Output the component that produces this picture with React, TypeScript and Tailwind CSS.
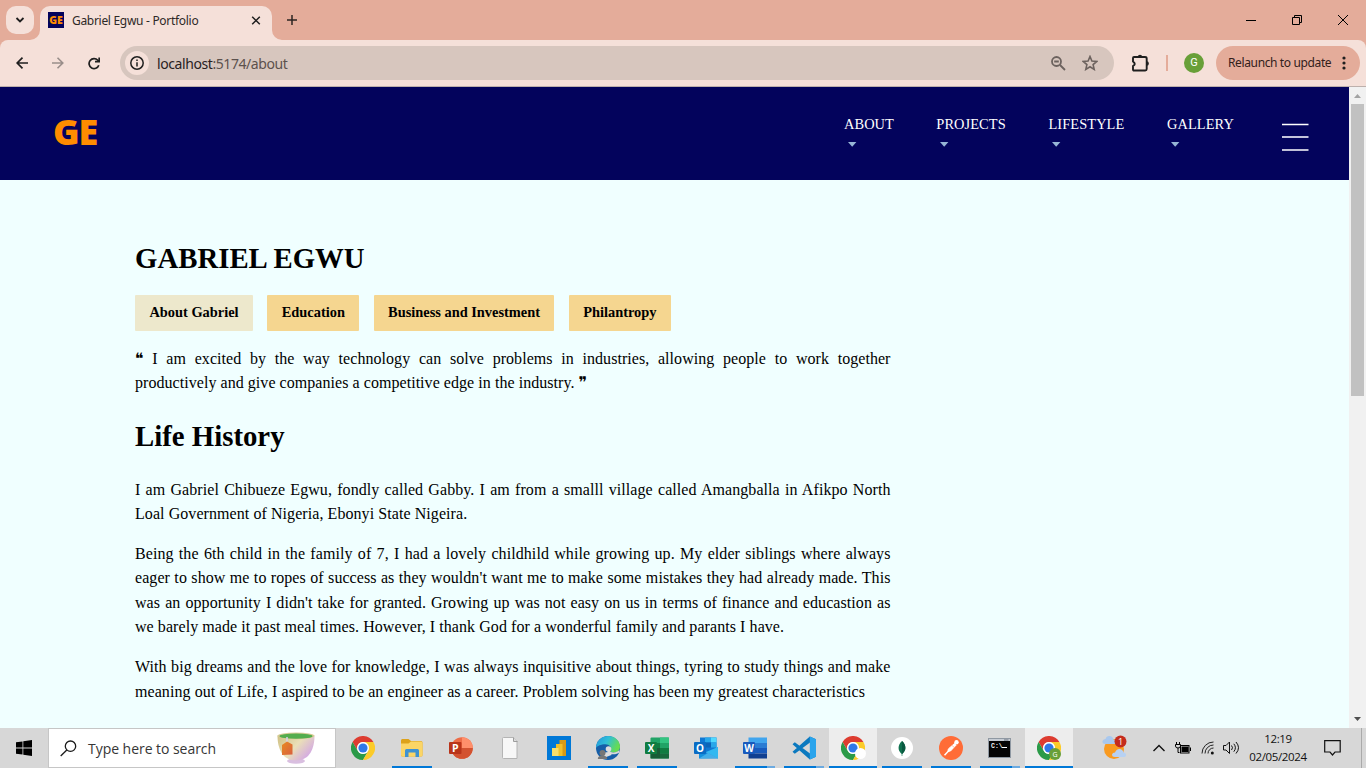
import React from "react";

const serif = "font-['Liberation_Serif',serif]";

function Chrome() {
  return (
    <svg width="24" height="24" viewBox="0 0 24 24">
      <path d="M1.6 6A12 12 0 0 1 22.4 6H12A6 6 0 0 0 6.8 15Z" fill="#dd3c30" />
      <path d="M1.6 6L6.8 15A6 6 0 0 0 17.2 15L12 24A12 12 0 0 1 1.6 6Z" fill="#2b9a48" />
      <path d="M22.4 6H12A6 6 0 0 1 17.2 15L12 24A12 12 0 0 0 22.4 6Z" fill="#fccb29" />
      <circle cx="12" cy="12" r="5.9" fill="#fff" />
      <circle cx="12" cy="12" r="4.6" fill="#2f78e8" />
    </svg>
  );
}

function Explorer() {
  return (
    <svg width="24" height="24" viewBox="0 0 24 24">
      <path d="M1 4.5Q1 3 2.200 3H8.500L11 5H21Q22.500 5 22.500 6.500V19Q22.500 20.500 21 20.500H2.500Q1 20.500 1 19Z" fill="#dda21a" />
      <path d="M1 7.500H8.500L11 5.500H21Q22.500 5.500 22.500 7V19Q22.500 20.500 21 20.500H2.500Q1 20.500 1 19Z" fill="#fbd566" />
      <path d="M5 21V14.500Q5 13 6.500 13H17.500Q19 13 19 14.500V21H15.500V16.500H8.500V21Z" fill="#3f92d2" />
    </svg>
  );
}

function PowerPoint() {
  return (
    <svg width="26" height="24" viewBox="0 0 26 24">
      <circle cx="14" cy="12" r="10.800" fill="#ed6c47" />
      <path d="M14 1.200A10.800 10.800 0 0 1 24.800 12H14Z" fill="#ff8f6b" />
      <path d="M3.200 12H24.800A10.800 10.800 0 0 1 3.200 12Z" fill="#d35230" />
      <rect x="1" y="6" width="12.500" height="12" rx="1" fill="#b9341a" />
      <text x="7.200" y="15.800" textAnchor="middle" fontSize="10.500" fontWeight="700" fill="#fff" fontFamily="Open Sans">P</text>
    </svg>
  );
}

function FilePage() {
  return (
    <svg width="24" height="24" viewBox="0 0 24 24">
      <path d="M5.500 1.500H15.500L19 5V22.500H5.500Q4.500 22.500 4.500 21.500V2.500Q4.500 1.500 5.500 1.500Z" fill="#f7f7f7" stroke="#b4b4b4" />
      <path d="M15.500 1.500V5.500H19.500" fill="#ddd" stroke="#9c9c9c" />
    </svg>
  );
}

function PowerBi() {
  return (
    <svg width="24" height="24" viewBox="0 0 24 24">
      <rect width="24" height="24" fill="#0078d7" />
      <rect x="12.500" y="4" width="6.500" height="16" fill="#d69a16" />
      <rect x="9" y="8" width="6.500" height="12" fill="#f0c029" />
      <rect x="5" y="12" width="6.500" height="8" fill="#f9df6a" />
    </svg>
  );
}

function Edge() {
  return (
    <svg width="24" height="24" viewBox="0 0 24 24">
      <defs>
        <linearGradient id="edgeTop" x1="0" y1="0" x2="1" y2=".4">
          <stop offset="0" stopColor="#2294dc" />
          <stop offset=".5" stopColor="#2fbfd8" />
          <stop offset="1" stopColor="#66dc52" />
        </linearGradient>
      </defs>
      <circle cx="12" cy="12" r="12" fill="#155ea8" />
      <path d="M0 12C0 5 5.500 0 12 0C19 0 24 5 24 10.500C24 14.500 21 16.500 17.500 16.500C14.500 16.500 13.500 15.300 14.200 14.300C16 11.500 13.500 8.300 9.500 8.300C5 8.300 1 10 0 12Z" fill="url(#edgeTop)" />
      <path d="M14.200 14.300C13.500 15.500 14.700 16.500 17.500 16.500C20 16.500 22 15.500 23.300 14V16.500C21.500 18 19 18.500 16 18.200C12 17.800 10 14 11.800 11.200Q14.300 12.200 14.200 14.300Z" fill="#d8d8d8" />
      <circle cx="12.500" cy="13" r="2.800" fill="#dcdcdc" />
      <path d="M7.500 22V18Q8 16 12.500 16Q15.500 16.500 15.500 19Z" fill="#dcdcdc" />
      <circle cx="6.500" cy="17" r="3" fill="#777" />
      <path d="M1.800 23Q1.800 19.500 6.500 19.500T11.200 23Z" fill="#777" />
    </svg>
  );
}

function Excel() {
  return (
    <svg width="26" height="24" viewBox="0 0 26 24">
      <rect x="6.500" y="1.500" width="18.500" height="21" rx="1" fill="#21a366" />
      <rect x="16" y="1.500" width="9" height="5.500" fill="#33c481" />
      <rect x="6.500" y="7" width="9.500" height="5" fill="#107c41" />
      <rect x="6.500" y="12" width="9.500" height="10.500" fill="#185c37" />
      <rect x="16" y="12" width="9" height="5.500" fill="#107c41" />
      <rect x="16" y="17.500" width="9" height="5" fill="#18693d" />
      <rect x="1" y="6" width="12" height="12" rx="1" fill="#107c41" />
      <text x="7" y="15.700" textAnchor="middle" fontSize="10" fontWeight="700" fill="#fff" fontFamily="Open Sans">X</text>
    </svg>
  );
}

function Outlook() {
  return (
    <svg width="26" height="24" viewBox="0 0 26 24">
      <rect x="7" y="1.500" width="16.500" height="15" fill="#0f78d4" />
      <rect x="12" y="1.500" width="6" height="5" fill="#28a8ea" />
      <rect x="18" y="1.500" width="5.500" height="5" fill="#50d9ff" />
      <rect x="12" y="6.500" width="6" height="5" fill="#0c64b8" />
      <rect x="18" y="6.500" width="5.500" height="5" fill="#28a8ea" />
      <path d="M6 12L15.500 17.500L25 11V22.500H6Z" fill="#1490df" />
      <path d="M25 11V22.500L13 16Z" fill="#32b8f0" />
      <path d="M6 22.500L25 22L15 17Z" fill="#45aee8" />
      <rect x="1" y="6" width="12" height="12" rx="1" fill="#0a6cc4" />
      <text x="7" y="15.700" textAnchor="middle" fontSize="10" fontWeight="700" fill="#fff" fontFamily="Open Sans">O</text>
    </svg>
  );
}

function Word() {
  return (
    <svg width="26" height="24" viewBox="0 0 26 24">
      <rect x="6.500" y="1.500" width="18.500" height="5.500" fill="#41a5ee" />
      <rect x="6.500" y="7" width="18.500" height="5" fill="#2b7cd3" />
      <rect x="6.500" y="12" width="18.500" height="5.500" fill="#185abd" />
      <rect x="6.500" y="17.500" width="18.500" height="5" fill="#103f91" />
      <rect x="1" y="6" width="12" height="12" rx="1" fill="#185abd" />
      <text x="7" y="15.700" textAnchor="middle" fontSize="10" fontWeight="700" fill="#fff" fontFamily="Open Sans">W</text>
    </svg>
  );
}

function VsCode() {
  return (
    <svg width="24" height="24" viewBox="0 0 24 24">
      <path d="M17.800 .500L24 3.200V20.800L17.800 23.500L.500 8.300L2.800 6.200L18 17.500V6.500L2.800 17.800L.500 15.700Z" fill="#0b79bf" />
      <path d="M17.800 .500L24 3.200V20.800L17.800 23.500Z" fill="#2aa4ec" />
    </svg>
  );
}

function Mongo() {
  return (
    <svg width="22" height="22" viewBox="0 0 22 22">
      <circle cx="11" cy="11" r="11" fill="#fff" />
      <path d="M11 4C15.500 8 15.500 13.500 11.300 17V19H10.700V17C6.500 13.500 6.500 8 11 4Z" fill="#10714f" />
      <path d="M11 4C15.500 8 15.500 13.500 11 17Z" fill="#0a5940" />
    </svg>
  );
}

function Postman() {
  return (
    <svg width="24" height="24" viewBox="0 0 24 24">
      <circle cx="12" cy="12" r="12" fill="#ff6c37" />
      <circle cx="17.500" cy="6.300" r="2.200" fill="#fff" />
      <path d="M15.500 7.500L17 9.200L11.500 15L9 15.300L9.300 13Z" fill="#fff" stroke="#fff" strokeWidth="1" />
      <path d="M10 14.500L5.500 19.200" stroke="#fff" strokeWidth="1.500" />
      <path d="M13 9.500L16 12" stroke="#ff9a75" strokeWidth=".6" />
    </svg>
  );
}

function Terminal() {
  return (
    <svg width="24" height="20" viewBox="0 0 24 20">
      <rect x=".500" y=".500" width="22" height="19" fill="#050505" stroke="#8f98a2" />
      <rect x="1" y="1" width="21" height="2" fill="#c6ccd4" />
      <path d="M16 2H20.500" stroke="#68717c" />
      <text x="3" y="10" fontSize="6.500" fontWeight="700" fill="#f4f4f4" fontFamily="Liberation Mono">C:\</text>
      <path d="M14 9.500H19" stroke="#fff" />
    </svg>
  );
}

function TeaCup() {
  return (
    <svg width="38" height="32" viewBox="0 0 38 32">
      <defs>
        <linearGradient id="cup" x1="0" y1="0" x2="1" y2=".6">
          <stop offset="0" stopColor="#cfc083" />
          <stop offset=".55" stopColor="#eadfb8" />
          <stop offset="1" stopColor="#d3a8e4" />
        </linearGradient>
        <linearGradient id="tag" x1="0" y1="0" x2="1" y2="1">
          <stop offset="0" stopColor="#e88a20" />
          <stop offset="1" stopColor="#d9603f" />
        </linearGradient>
      </defs>
      <ellipse cx="19" cy="29" rx="9" ry="2.800" fill="#d9bfe0" />
      <path d="M.500 3.500H37.500C37.500 16 33 28.500 19 28.500S.500 16 .500 3.500Z" fill="url(#cup)" />
      <ellipse cx="19" cy="3.800" rx="18.500" ry="3.400" fill="#d8cb95" />
      <ellipse cx="19" cy="4.200" rx="16.500" ry="2.600" fill="#53ad4e" />
      <path d="M10 5V11" stroke="#d7d2ea" strokeWidth="1.500" />
      <path d="M5 13L10 9.500L15.500 12.500V22.500L5 23Z" fill="url(#tag)" />
    </svg>
  );
}

function Weather() {
  return (
    <svg width="26" height="26" viewBox="0 0 26 26">
      <circle cx="12" cy="14" r="10" fill="#f99a20" />
      <path d="M3.500 9Q0 9 .500 6Q1.500 4 3.500 4Q4.500 .5 8 1Q11 1.500 11.500 4.500Q14 5 13.500 9Z" fill="#a9c8ee" />
      <path d="M13 22Q10 22 10 19.500Q10.500 17.500 13 17.500Q14.500 13.500 18 14Q21 14.500 21.500 17.500Q24.500 18 24 20.500Q23.500 22 22 22Z" fill="#b7d1f3" />
      <circle cx="18.500" cy="6.500" r="6" fill="#c42b1c" />
      <text x="18.500" y="10" textAnchor="middle" fontSize="9" fill="#fff" fontFamily="Open Sans">1</text>
    </svg>
  );
}

type Slot = { icon: React.ReactNode; bar?: "open" | "stack"; active?: boolean; badge?: React.ReactNode };

const slots: Slot[] = [
  { icon: <Chrome /> },
  { icon: <Explorer />, bar: "open" },
  { icon: <PowerPoint /> },
  { icon: <FilePage /> },
  { icon: <PowerBi /> },
  { icon: <Edge />, bar: "open" },
  { icon: <Excel />, bar: "open" },
  { icon: <Outlook /> },
  { icon: <Word />, bar: "stack" },
  { icon: <VsCode />, bar: "stack" },
  { icon: <Chrome />, active: true, badge: <span className="absolute left-[26px] top-[20px] size-[11px] rounded-full bg-white" /> },
  { icon: <Mongo />, bar: "open" },
  { icon: <Postman />, bar: "open" },
  { icon: <Terminal />, bar: "stack" },
  {
    icon: <Chrome />,
    active: true,
    badge: (
      <span className="absolute left-[24px] top-[20px] flex size-3 items-center justify-center rounded-full bg-[#689f38] text-[7px] leading-none text-white">G</span>
    ),
  },
];

function TitleBar() {
  return (
    <div className="flex h-10 bg-[#e4ac9a]">
      <button className="ml-1.5 mt-1.5 flex size-7 items-center justify-center rounded-[10px] bg-[#f5e0d9]">
        <svg width="10" height="8" viewBox="0 0 10 8" fill="none" stroke="#1f1f1f" strokeWidth="1.800"><path d="M1.500 2L5 5.500L8.500 2" /></svg>
      </button>
      <div className="relative ml-1.5 mt-1.5 flex h-[34px] w-[232px] items-start rounded-t-[10px] bg-[#f5e0d9] pl-2 pt-1.5">
        <svg className="absolute -left-2.5 bottom-0" width="10" height="10"><path d="M10 0V10H0A10 10 0 0 0 10 0Z" fill="#f5e0d9" /></svg>
        <svg className="absolute -right-2.5 bottom-0" width="10" height="10"><path d="M0 0V10H10A10 10 0 0 1 0 0Z" fill="#f5e0d9" /></svg>
        <span className="flex size-4 items-center justify-center bg-[#03035c] font-['Open_Sans',sans-serif] text-[10.5px] font-extrabold leading-none text-[#ff8c00]">GE</span>
        <span className="ml-2 w-[179px] text-[12px] leading-[17px] tracking-[-0.3px] text-[#2e2927]">Gabriel Egwu - Portfolio</span>
        <svg className="mt-1" width="10" height="9" viewBox="0 0 10 9" stroke="#1f1f1f" strokeWidth="1.500"><path d="M1.200 .700L8.800 8.300M8.800 .700L1.200 8.300" /></svg>
      </div>
      <svg className="ml-[15px] mt-[15px]" width="10" height="10" stroke="#2c2422" strokeWidth="1.500"><path d="M5 0V10M0 5H10" /></svg>
      <div className="ml-auto flex pt-[15px]">
        <svg className="mr-9" width="10" height="10" stroke="#000"><path d="M0 5.500H10" /></svg>
        <svg className="mr-9" width="10" height="10" fill="none" stroke="#000"><path d="M.500 2.500H7.500V9.500H.500ZM2.500 2V.500H9.500V7.500H8" /></svg>
        <svg className="mr-[18px]" width="10" height="10" stroke="#000"><path d="M0 0L10 10M10 0L0 10" /></svg>
      </div>
    </div>
  );
}

function Toolbar() {
  return (
    <div className="bg-[#e4ac9a]">
      <div className="flex h-[47px] items-center rounded-t-[8px] border-b border-[#bdb0ac] bg-[#f5e0d9]">
        <svg className="ml-4" width="12" height="12" fill="none" stroke="#1f1f1f" strokeWidth="1.700"><path d="M12 6H1.500M6.500 .700L1.200 6L6.500 11.300" /></svg>
        <svg className="ml-6" width="12" height="12" fill="none" stroke="#998e8a" strokeWidth="1.600"><path d="M0 6H10.500M5.500 .700L10.800 6L5.500 11.300" /></svg>
        <svg className="ml-6" width="12" height="13" viewBox="0 0 12 13" fill="none" stroke="#1f1f1f" strokeWidth="1.700"><path d="M10.800 8.200A5 5 0 1 1 9.800 3.200L11 4.400" /><path d="M11.200 .500V4.700H7" /></svg>
        <div className="ml-5 flex h-[34px] w-[994px] items-center rounded-full bg-[#d7c6be] pl-[5px]">
          <span className="flex size-6 items-center justify-center rounded-full bg-[#f5e0d9]">
            <svg width="14" height="14" viewBox="0 0 14 14" fill="none" stroke="#1f1f1f" strokeWidth="1.500"><circle cx="7" cy="7" r="6.200" /><path d="M7 6.200V10.500M7 3.500V5" /></svg>
          </span>
          <span className="ml-2 text-[14px] tracking-[-0.42px] text-[#5c514d]"><span className="text-[#29211f]">localhost</span>:5174/about</span>
          <svg className="ml-auto" width="15" height="15" viewBox="0 0 15 15" fill="none" stroke="#6c625e" strokeWidth="1.800"><circle cx="5.500" cy="5.500" r="4.500" /><path d="M9 9L14 14M3.200 5.500H7.800" /></svg>
          <svg className="ml-4 mr-4" width="16" height="16" viewBox="0 0 16 16" fill="none" stroke="#6c625e" strokeWidth="1.600"><path d="M8 1.500L9.900 6L14.800 6.400L11.100 9.600L12.200 14.400L8 11.800L3.800 14.400L4.900 9.600L1.200 6.400L6.100 6Z" /></svg>
        </div>
        <svg className="ml-[18px]" width="18" height="18" viewBox="0 0 18 18"><path d="M2 3H13Q14.700 3 14.700 4.500V15Q14.700 16.500 13.200 16.500H2Q1 16.500 1 15.500V12Q4.500 10 1 7.500V4Q1 3 2 3Z" fill="none" stroke="#1f1f1f" strokeWidth="1.900" /><path d="M5.800 3A2.200 2.200 0 0 1 10.200 3ZM14.700 7.300A2.200 2.200 0 0 1 14.700 11.700Z" fill="#1f1f1f" /></svg>
        <span className="ml-4 h-4 w-0.5 bg-[#e4ac9a]" />
        <span className="ml-4 flex size-5 items-center justify-center rounded-full bg-[#689f38] font-['Roboto',sans-serif] text-[11px] text-white">G</span>
        <div className="ml-3 flex h-[34px] w-36 items-center rounded-full bg-[#e4ac9a] pl-3">
          <span className="whitespace-nowrap text-[12px] tracking-[-0.37px] text-[#33201a]">Relaunch to update</span>
          <svg className="ml-auto mr-3.5" width="4" height="14" fill="#1f1f1f"><circle cx="2" cy="2" r="1.600" /><circle cx="2" cy="7" r="1.600" /><circle cx="2" cy="12" r="1.600" /></svg>
        </div>
      </div>
    </div>
  );
}

function NavItem({ label, className }: { label: string; className: string }) {
  return (
    <div className={`flex flex-col ${className}`}>
      <span className="text-[14.4px] leading-[18px] tracking-[0.08px]">{label}</span>
      <svg className="ml-[4px] mt-[9px]" width="9" height="5"><path d="M0 0H8.400L4.200 4.800Z" fill="#97b6d6" /></svg>
    </div>
  );
}

function SiteHeader() {
  return (
    <header className={`flex h-[93px] shrink-0 items-start bg-[#03035c] text-white ${serif}`}>
      <div className="ml-[53px] mt-[26px] w-[791px] font-['Open_Sans',sans-serif] text-[36px] font-extrabold leading-[37px] tracking-[-1.2px] text-[#ff8c00]">GE</div>
      <nav className="flex pt-[28px]">
        <NavItem label="ABOUT" className="w-[92.300px]" />
        <NavItem label="PROJECTS" className="w-[112.200px]" />
        <NavItem label="LIFESTYLE" className="w-[118.500px]" />
        <NavItem label="GALLERY" className="w-[115px]" />
      </nav>
      <svg className="mt-[36px]" width="27" height="30"><path d="M0 1.500H26.500M0 27H26.500" stroke="#fff" strokeWidth="1.600" /><path d="M0 14H26.500" stroke="#c4c4dc" strokeWidth="2" /></svg>
    </header>
  );
}

function TabButton({ label, active }: { label: string; active?: boolean }) {
  return (
    <button className={`h-9 whitespace-nowrap rounded-[1px] px-[14.4px] text-[14.4px] font-bold leading-[34px] pb-0.5 text-black ${active ? "bg-[#ede8cc]" : "bg-[#f5d690]"}`}>{label}</button>
  );
}

function Article() {
  return (
    <main className={`w-[890.5px] pl-[135px] pt-[60px] text-[16px] leading-[24.48px] text-black ${serif}`}>
      <h1 className="text-[28.8px] font-bold leading-9">GABRIEL EGWU</h1>
      <div className="mt-[19px] flex gap-[14.4px]">
        <TabButton label="About Gabriel" active />
        <TabButton label="Education" />
        <TabButton label="Business and Investment" />
        <TabButton label="Philantropy" />
      </div>
      <p className="mt-4 text-justify tracking-[0.05px]">
        <span className="font-['DejaVu_Sans',sans-serif] text-[16px] leading-none tracking-normal">❝</span> I am excited by the way technology can solve problems in industries, allowing people to work together productively and give companies a competitive edge in the industry. <span className="font-['DejaVu_Sans',sans-serif] text-[16px] leading-none tracking-normal">❞</span>
      </p>
      <h2 className="mt-[22px] text-[28.8px] font-bold leading-9">Life History</h2>
      <div className="mt-[23.7px] flex flex-col gap-[15.3px] text-justify tracking-[0.07px]">
        <p>I am Gabriel Chibueze Egwu, fondly called Gabby. I am from a smalll village called Amangballa in Afikpo North Loal Government of Nigeria, Ebonyi State Nigeira.</p>
        <p>Being the 6th child in the family of 7, I had a lovely childhild while growing up. My elder siblings where always eager to show me to ropes of success as they wouldn't want me to make some mistakes they had already made. This was an opportunity I didn't take for granted. Growing up was not easy on us in terms of finance and educastion as we barely made it past meal times. However, I thank God for a wonderful family and parants I have.</p>
        <p>With big dreams and the love for knowledge, I was always inquisitive about things, tyring to study things and make meaning out of Life, I aspired to be an engineer as a career. Problem solving has been my greatest characteristics</p>
      </div>
    </main>
  );
}

function Scrollbar() {
  return (
    <div className="flex w-[17px] shrink-0 flex-col items-center bg-[#f1f1f1]">
      <svg className="mt-[7px]" width="7" height="4"><path d="M0 4L3.500 0L7 4Z" fill="#a3a3a3" /></svg>
      <div className="mt-1.5 h-[292px] w-[13px] bg-[#c1c1c1]" />
      <svg className="mb-[7px] mt-auto" width="7" height="4"><path d="M0 0L3.500 4L7 0Z" fill="#505050" /></svg>
    </div>
  );
}

function Taskbar() {
  return (
    <footer className="flex h-10 shrink-0 bg-[#d7d7d7] font-['Open_Sans',sans-serif]">
      <div className="flex w-12 items-center justify-center">
        <svg width="16" height="16" viewBox="0 0 16 16"><path d="M0 2.300L6.500 1.400V7.600H0ZM7.300 1.300L16 0V7.600H7.300ZM0 8.400H6.500V14.600L0 13.700ZM7.300 8.400H16V16L7.300 14.700Z" fill="#000" /></svg>
      </div>
      <div className="flex w-72 items-center border border-[#c6c6c6] bg-white pl-[11px]">
        <svg width="17" height="17" viewBox="0 0 17 17" fill="none" stroke="#1a1a1a" strokeWidth="1.300"><circle cx="10.500" cy="6.200" r="5.200" /><path d="M6.800 10L.700 16" /></svg>
        <span className="ml-[11px] text-[14px] tracking-[-0.04px] text-[#363636]">Type here to search</span>
        <span className="ml-auto mr-5"><TeaCup /></span>
      </div>
      <div className="ml-[3px] flex gap-px">
        {slots.map((s, i) => (
          <div key={i} className={`relative flex w-12 flex-col items-center ${s.active ? "bg-[#ededed]" : ""}`}>
            <div className="flex h-10 items-center">{s.icon}</div>
            {s.badge}
            {s.active && <span className="absolute bottom-0 left-0 h-0.5 w-12 bg-[#0078d7]" />}
            {s.bar === "open" && <span className="absolute bottom-0 left-1 h-0.5 w-10 bg-[#0078d7]" />}
            {s.bar === "stack" && <span className="absolute bottom-0 left-1 h-0.5 w-10 border-r-8 border-[#6caae0] bg-[#0078d7]" />}
          </div>
        ))}
      </div>
      <div className="ml-auto flex items-center">
        <span className="mr-[25px]"><Weather /></span>
        <svg className="mr-[10px]" width="12" height="8" fill="none" stroke="#111" strokeWidth="1.400"><path d="M.500 7L6 1.500L11.500 7" /></svg>
        <svg className="mr-[10px]" width="16" height="13" viewBox="0 0 16 13" fill="none" stroke="#000" ><path d="M1.500 0V2.500M4.500 0V2.500M.500 2.500H5.500V4Q5.500 6 3 6T.500 4ZM3 6V10.500H4.500" /><rect x="5.500" y="3.500" width="8.500" height="7.500" /><rect x="7" y="5" width="6" height="4.500" fill="#000" /><path d="M15.500 5.500V9" /></svg>
        <svg className="mr-2" width="14" height="14" viewBox="0 0 14 14" fill="none" stroke="#222"><path d="M1 12.500A11.500 11.500 0 0 1 12.500 1M4 12.500A8.500 8.500 0 0 1 12.500 4M7 12.500A5.500 5.500 0 0 1 12.500 7" /><circle cx="11.300" cy="12" r="1.500" fill="#111" stroke="none" /></svg>
        <svg className="mr-[8px]" width="17" height="14" viewBox="0 0 17 14" fill="none" stroke="#111"><path d="M.500 4.500H3L6.500 1V12.500L3 9H.500ZM8.500 4.500Q10.500 6.700 8.500 9M10.800 2.800Q14 6.700 10.800 10.700M13 1Q18 6.700 13 12.500" /></svg>
        <div className="w-[60px] whitespace-nowrap text-center text-[11.500px] leading-[18px] tracking-[-0.350px] text-[#111]">12:19<br />02/05/2024</div>
        <svg className="ml-[16px]" width="17" height="16" viewBox="0 0 17 16" fill="none" stroke="#111" strokeWidth="1.200"><path d="M.700 .700H16.200V12H11L8.500 15L6 12H.700Z" /></svg>
        <span className="ml-5 mr-1 h-10 w-px bg-[#aaa]" />
      </div>
    </footer>
  );
}

export default function App() {
  return (
    <div className="flex h-[768px] w-[1366px] flex-col overflow-hidden bg-[#f0ffff] font-['Noto_Sans',sans-serif]">
      <TitleBar />
      <Toolbar />
      <div className="flex min-h-0 flex-1">
        <div className="flex min-w-0 flex-1 flex-col overflow-hidden">
          <SiteHeader />
          <Article />
        </div>
        <Scrollbar />
      </div>
      <Taskbar />
    </div>
  );
}
